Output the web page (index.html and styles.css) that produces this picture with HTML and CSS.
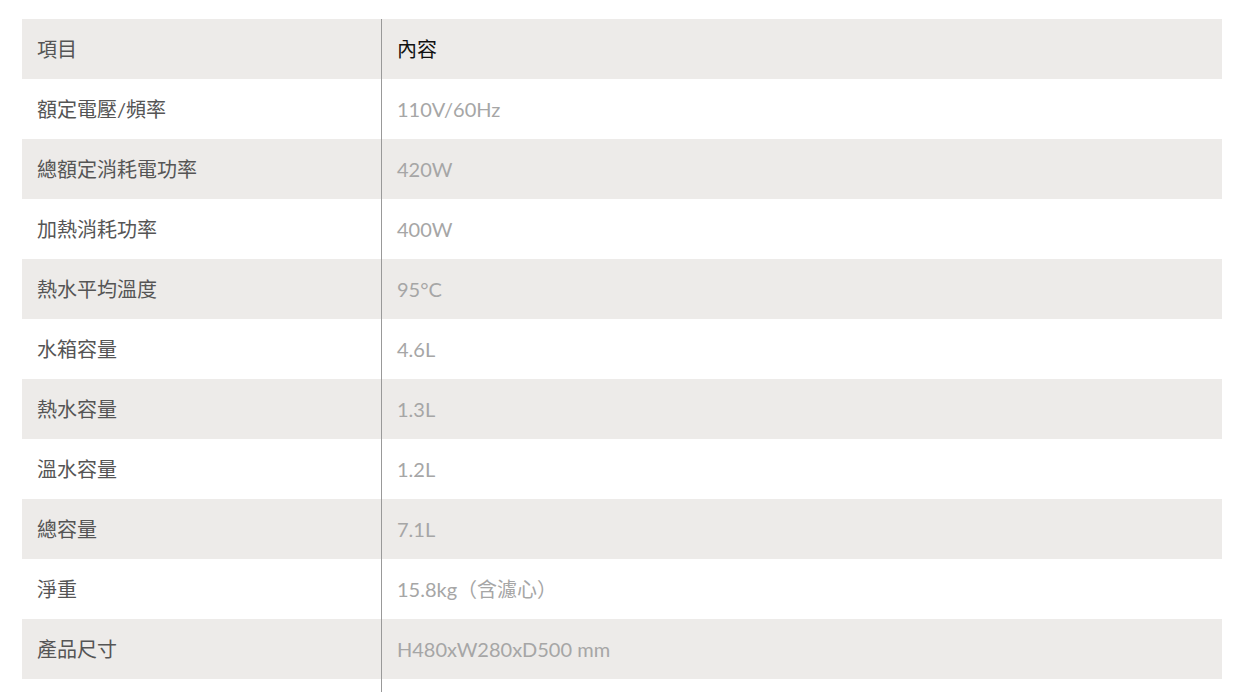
FILE: index.html
```html
<!DOCTYPE html>
<html lang="zh-Hant">
<head>
<meta charset="utf-8">
<link rel="stylesheet" href="styles.css">
</head>
<body>
<table class="spec">
  <tr class="head"><td class="k">項目</td><td class="v">內容</td></tr>
  <tr><td class="k">額定電壓/頻率</td><td class="v">110V/60Hz</td></tr>
  <tr><td class="k">總額定消耗電功率</td><td class="v">420W</td></tr>
  <tr><td class="k">加熱消耗功率</td><td class="v">400W</td></tr>
  <tr><td class="k">熱水平均溫度</td><td class="v">95°C</td></tr>
  <tr><td class="k">水箱容量</td><td class="v">4.6L</td></tr>
  <tr><td class="k">熱水容量</td><td class="v">1.3L</td></tr>
  <tr><td class="k">溫水容量</td><td class="v">1.2L</td></tr>
  <tr><td class="k">總容量</td><td class="v">7.1L</td></tr>
  <tr><td class="k">淨重</td><td class="v">15.8kg（含濾心）</td></tr>
  <tr><td class="k">產品尺寸</td><td class="v">H480xW280xD500 mm</td></tr>
  <tr><td class="k">&nbsp;</td><td class="v">&nbsp;</td></tr>
</table>
</body>
</html>
```
FILE: styles.css
```css
html, body {
  margin: 0;
  padding: 0;
  background: #fff;
}
body {
  padding: 19px 35px 0 22px;
  font-family: Lato, "Noto Sans CJK TC", sans-serif;
  font-size: 20px;
}
.spec {
  width: 1200px;
  border-collapse: collapse;
  border-spacing: 0;
}
.spec td {
  height: 60px;
  padding: 0 15px;
  vertical-align: middle;
  line-height: 24px;
}
.spec tr:nth-child(odd) td {
  background: #edebe9;
}
.spec .k {
  width: 329px;
  color: #555;
}
.spec .v {
  border-left: 1px solid #999;
  color: #a6a6a6;
}
.spec .head .v {
  color: #111;
}
```
